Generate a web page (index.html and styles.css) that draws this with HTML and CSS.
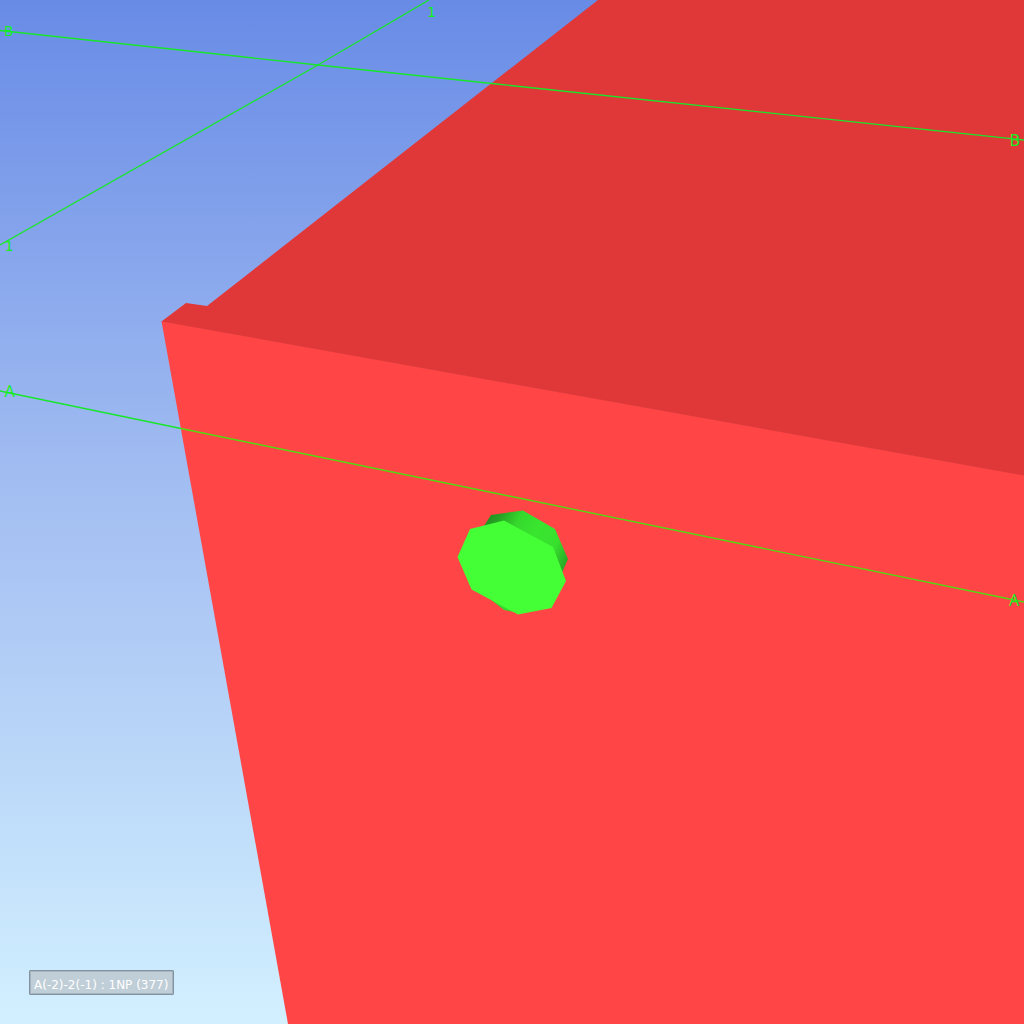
FILE: index.html
```html
<!DOCTYPE html>
<html lang="en">
<head>
<meta charset="utf-8">
<title>Model view</title>
<link rel="stylesheet" href="styles.css">
</head>
<body>
<main class="viewport">
  <svg class="scene" viewBox="0 0 1024 1024" aria-label="3D model">
    <defs>
      <linearGradient id="bolt-side" gradientUnits="userSpaceOnUse" x1="486" y1="518" x2="574" y2="564">
        <stop offset="0" stop-color="#229022"/>
        <stop offset="0.12" stop-color="#28a224"/>
        <stop offset="0.3" stop-color="#35d92d"/>
        <stop offset="0.5" stop-color="#39e52f"/>
        <stop offset="0.75" stop-color="#38e02e"/>
        <stop offset="1" stop-color="#249023"/>
      </linearGradient>
    </defs>
    <path class="face-front" d="M161.500 321 1024 475V1024H288Z"/>
    <path class="face-top" d="M161.500 321.500 186 303 207 306 598 0H1024V475.500Z"/>
    <g class="grid">
      <path d="M0 30.500 318 65 492 83.500 1024 140"/>
      <path d="M0 245 318 65 429 0"/>
      <path d="M0 391 181 428.500"/>
      <path class="grid-over-front" d="M181 428.500 1024 602"/>
    </g>
    <path fill="url(#bolt-side)" d="M484 526 491 515 523 510.500 555 529 568 559 560 577 520 600Z"/>
    <path class="bolt-edge" d="M490 599 504 610 518 613V600Z"/>
    <path class="bolt-face" d="M504 520.500 553 547 566 581 551.500 608 518 614.500 471.500 589.500 457.500 557 470 529Z"/>
    <g class="labels">
      <text class="label-small" x="4" y="35.500">B</text>
      <text class="label-number" x="427" y="17">1</text>
      <text class="label-number" x="4.500" y="251">1</text>
      <text x="4.500" y="397">A</text>
      <text x="1009.500" y="146">B</text>
      <text x="1009" y="606">A</text>
    </g>
  </svg>
  <div class="tooltip">A(-2)-2(-1) : 1NP (377)</div>
</main>
</body>
</html>
```
FILE: styles.css
```css
body {
  margin: 0;
  overflow: hidden;
}

.viewport {
  position: relative;
  width: 1024px;
  height: 1024px;
  background: linear-gradient(#688be6 0%, #a0bbf1 45%, #d2f0ff 100%);
}

.scene {
  display: block;
  width: 1024px;
  height: 1024px;
}

.face-front { fill: #ff4545; }
.face-top { fill: #e03838; }
.bolt-face { fill: #44ff36; }
.bolt-edge { fill: #35d92d; }

.grid {
  fill: none;
  stroke: #18e62b;
  stroke-width: 1.35;
}

.grid-over-front { stroke: #4fdc10; }

.labels {
  fill: #16ee24;
  font: 16px "Noto Sans", sans-serif;
}

.label-small { font-size: 14px; }
.label-number { font: 14.5px "DejaVu Sans", sans-serif; }

/* Object name shown over the model */
.tooltip {
  position: absolute;
  left: 29px;
  top: 970px;
  box-sizing: border-box;
  width: 145px;
  height: 25px;
  padding: 3px 0 0 4px;
  border: 1px solid #82939f;
  border-radius: 1px;
  box-shadow: inset 0 0 0 1px #a5b4be;
  background: #bfced7;
  color: #fff;
  font: 12px/22px "DejaVu Sans", sans-serif;
  white-space: nowrap;
}
```
